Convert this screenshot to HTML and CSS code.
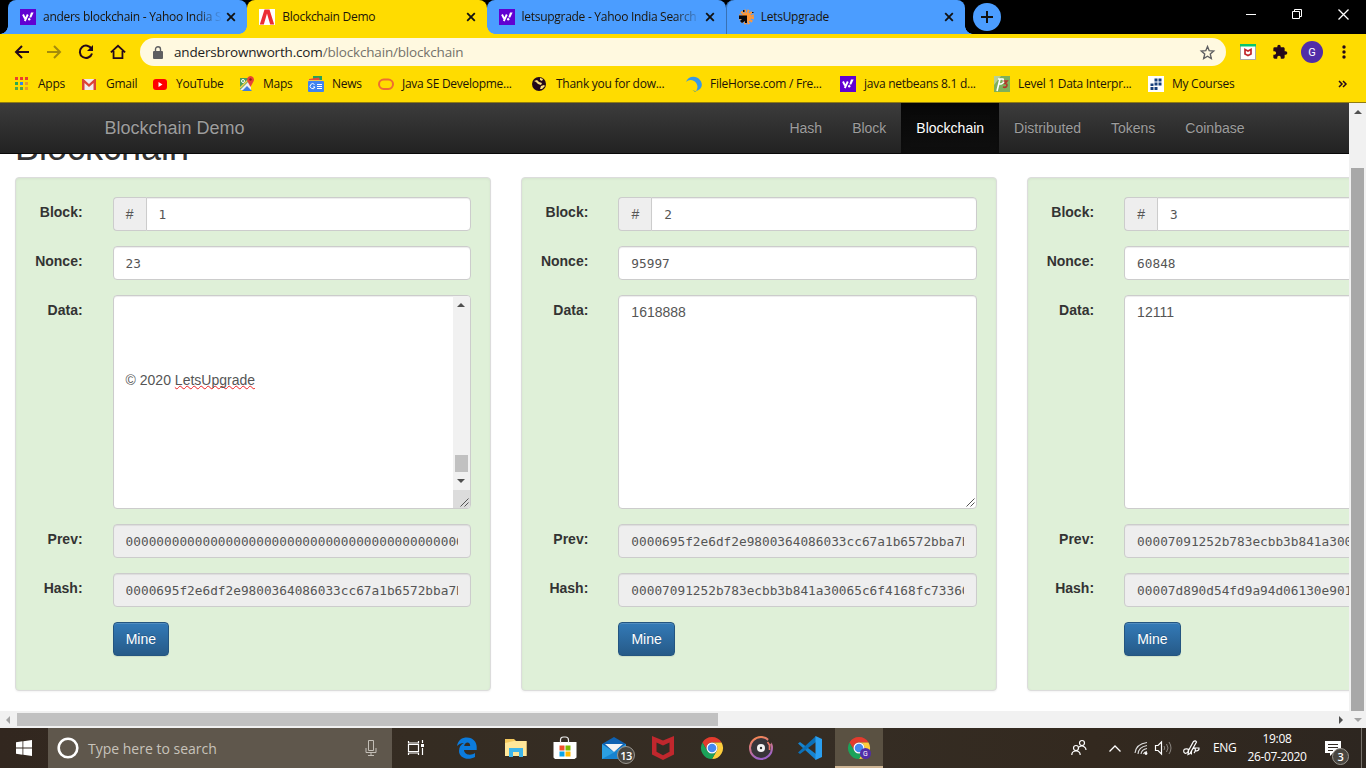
FILE: index.html
```html
<!DOCTYPE html>
<html lang="en">
<head>
<meta charset="utf-8">
<title>Blockchain Demo</title>
<link rel="stylesheet" href="styles.css">
</head>
<body>
<svg width="0" height="0" class="defs">
  <symbol id="yahoo" viewBox="0 0 16 16"><rect width="16" height="16" fill="#6001d2"/><path d="M3 5.500l2 4M7.800 5.500L4.800 12" stroke="#fff" stroke-width="1.900" fill="none"/><path d="M11 3.500h2.600L11.300 8.600H9.300z" fill="#fff"/><circle cx="9.200" cy="10.300" r="1.200" fill="#fff"/></symbol>
  <symbol id="close" viewBox="0 0 10 10"><path d="M1.200 1.200l7.600 7.600M8.800 1.200L1.200 8.800" stroke="#111" stroke-width="1.800" fill="none"/></symbol>
  <symbol id="chrome" viewBox="0 0 24 24"><path d="M2.470 6.500A11 11 0 0 1 21.530 6.500H12A5.500 5.500 0 0 0 7.240 14.750z" fill="#e33b2e"/><path d="M21.530 6.500A11 11 0 0 1 12 23L16.760 14.750A5.500 5.500 0 0 0 12 6.500z" fill="#fdcd3c"/><path d="M12 23A11 11 0 0 1 2.470 6.500L7.240 14.750A5.500 5.500 0 0 0 16.760 14.750z" fill="#1ba35a"/><circle cx="12" cy="12" r="5.500" fill="#fff"/><circle cx="12" cy="12" r="4.300" fill="#4688f1"/></symbol>
</svg>

<header class="browser">
  <div class="tabs">
    <div class="tab"><svg class="fav"><use href="#yahoo"/></svg><span class="title fade">anders blockchain - Yahoo India S</span><svg class="x"><use href="#close"/></svg></div>
    <div class="tab active"><svg class="fav" viewBox="0 0 16 16"><rect width="16" height="16" fill="#fff"/><path d="M.8 15.500L5.500.5h5l4.700 15h-4L8 4.500l-3.200 11z" fill="#ec2d35"/></svg><span class="title">Blockchain Demo</span><svg class="x"><use href="#close"/></svg></div>
    <div class="tab"><svg class="fav"><use href="#yahoo"/></svg><span class="title fade">letsupgrade - Yahoo India Search</span><svg class="x"><use href="#close"/></svg></div>
    <div class="tab last"><svg class="fav" viewBox="0 0 16 16"><circle cx="8.500" cy="8" r="6" fill="none" stroke="#ff9838" stroke-width="3" stroke-dasharray="2 1.140"/><circle cx="8.500" cy="8" r="4.800" fill="#ff9838"/><path d="M1 6.500h8V14H7v-2l-3 2-2-2 2-2H1zM5 1h1.500v2H5zM14 3h1.500v1H14z" fill="#08080c"/></svg><span class="title">LetsUpgrade</span><svg class="x"><use href="#close"/></svg></div>
    <button class="newtab"><svg width="12" height="12" viewBox="0 0 12 12"><path d="M6 0v12M0 6h12" stroke="#111" stroke-width="2"/></svg></button>
    <div class="window">
      <svg width="10" height="10"><path d="M0 5.500h10" stroke="#fff"/></svg>
      <svg width="10" height="10" viewBox="0 0 10 10"><path d="M.5 2.500h7v7h-7zM2.500 2.500v-2h7v7h-2" stroke="#fff" fill="none"/></svg>
      <svg width="11" height="11" viewBox="0 0 11 11"><path d="M.5.5l10 10M10.500.5l-10 10" stroke="#fff" stroke-width="1.300"/></svg>
    </div>
  </div>

  <div class="toolbar">
    <div class="nav-icons">
      <svg viewBox="0 0 16 16"><path d="M15 8H2M8 2L2 8l6 6" class="ink"/></svg>
      <svg viewBox="0 0 16 16"><path d="M1 8h13M8 2l6 6-6 6" fill="none" stroke="#a48b0b" stroke-width="2"/></svg>
      <svg viewBox="0 0 16 16"><path d="M13.600 5A6.200 6.200 0 1 0 14 9.500" class="ink"/><path d="M15 1v6H9z" fill="#24091a"/></svg>
      <svg viewBox="0 0 18 18"><path d="M1 9.500L9 2l8 7.500M4 8v8h10V8" class="ink"/></svg>
    </div>
    <div class="address">
      <svg width="10" height="13" viewBox="0 0 10 13"><path d="M1 5h8q1 0 1 1v6q0 1-1 1H1q-1 0-1-1V6q0-1 1-1z" fill="#5f5f61"/><path d="M2.500 6V3.200a2.500 2.500 0 0 1 5 0V6" fill="none" stroke="#5f5f61" stroke-width="1.400"/></svg>
      <span class="url">andersbrownworth.com<i>/blockchain/blockchain</i></span>
      <svg class="star" width="15" height="15" viewBox="0 0 15 15"><path d="M7.500 1.500l1.700 4.200 4.500.4-3.400 3 1 4.400-3.800-2.300-3.800 2.300 1-4.400-3.400-3 4.500-.4z" fill="none" stroke="#5f5f61" stroke-width="1.400"/></svg>
    </div>
    <div class="ext">
      <svg width="16" height="16" viewBox="0 0 16 16"><rect x=".5" y=".5" width="15" height="15" fill="#fff" stroke="#aaa"/><path d="M0 0h16v2.500H0z" fill="#08c66c"/><path d="M5 5.500l3 1.500 3-1.500V10l-3 1.500L5 10z" fill="none" stroke="#c1272d" stroke-width="1.700"/></svg>
      <svg width="16" height="16" viewBox="0 0 24 24"><path d="M20.500 11H19V7c0-1.100-.9-2-2-2h-4V3.500a2.500 2.500 0 0 0-5 0V5H4a2 2 0 0 0-2 2v3.800h1.500a2.700 2.700 0 0 1 0 5.400H2V20c0 1.100.9 2 2 2h3.800v-1.500a2.700 2.700 0 0 1 5.400 0V22H17a2 2 0 0 0 2-2v-4h1.500a2.500 2.500 0 0 0 0-5z" fill="#24091a"/></svg>
      <span class="avatar">G</span>
      <svg width="4" height="14" viewBox="0 0 4 14"><g fill="#24091a"><circle cx="2" cy="2" r="1.700"/><circle cx="2" cy="7" r="1.700"/><circle cx="2" cy="12" r="1.700"/></g></svg>
    </div>
  </div>

  <div class="bookmarks">
    <a><svg viewBox="0 0 16 16"><path d="M1 1h3v3H1zM6 1h3v3H6zM11 1h3v3h-3z" fill="#e8402c"/><path d="M1 6h3v3H1z" fill="#2ba84f"/><path d="M6 6h3v3H6z" fill="#3385ec"/><path d="M11 6h3v3h-3zM11 11h3v3h-3z" fill="#e99a2b"/><path d="M1 11h3v3H1zM6 11h3v3H6z" fill="#57a845"/></svg><span>Apps</span></a>
    <a><svg viewBox="0 0 16 16"><path d="M0 3h14v11H0z" fill="#f0eeee"/><path d="M0 14V3h1.500L7 8l5.500-5H14v11h-2.500V7L7 11 2.500 7v7z" fill="#dc4437"/></svg><span>Gmail</span></a>
    <a><svg viewBox="0 0 16 16"><rect x="1" y="3" width="14" height="11" rx="3" fill="#f00"/><path d="M6.500 6v5l4-2.500z" fill="#fff"/></svg><span>YouTube</span></a>
    <a><svg viewBox="0 0 16 16"><path d="M1 2h11v12H1z" fill="#4a9e5b"/><path d="M1 14L12 3v11z" fill="#eee"/><path d="M3 15l5-5 5 5z" fill="#3f7de0"/><path d="M1 12L12 1" stroke="#f6d14c" stroke-width="1.500"/><circle cx="4" cy="5" r="1.500" fill="none" stroke="#fff"/><path d="M11.500 11L8.300 5a3.500 3.500 0 1 1 6.400 0z" fill="#e74335"/><circle cx="11.500" cy="3.500" r="1.200" fill="#8c1d18"/></svg><span>Maps</span></a>
    <a><svg viewBox="0 0 16 16"><path d="M5 0h9v4H5z" fill="#28a05a"/><path d="M1 3l10-1.500 1 3H1z" fill="#e84b39"/><path d="M0 4h14v3H0z" fill="#f7c64a"/><rect y="5" width="16" height="11" rx="1" fill="#3f83ef"/><path d="M6.500 8.500A2.500 2.500 0 1 0 7 11H5M9 8.500h5M9 10.500h5M9 12.500h5" stroke="#fff" fill="none"/></svg><span>News</span></a>
    <a><svg viewBox="0 0 16 16"><rect x="1" y="3.500" width="14" height="9.500" rx="4.700" fill="none" stroke="#ee6d32" stroke-width="2"/></svg><span>Java SE Developme...</span></a>
    <a><svg viewBox="0 0 16 16"><circle cx="7" cy="8" r="7" fill="#24091a"/><path d="M2 5l3-1 2 2 3 1-1 2-3-1-2-2zM8 2l3 1-1 2-2-1zM9 10l3-1 1 1-3 3H8z" fill="#fbe07c"/></svg><span>Thank you for dow...</span></a>
    <a><svg viewBox="0 0 16 16"><path d="M0 6C2 0 10-1 14 4s1 10-4 11c3-4 1-8-2-10C5 3 2 4 0 6z" fill="#3799e7"/><path d="M4 12q4 4 7 3l-2 1z" fill="#5c9b82"/></svg><span>FileHorse.com / Fre...</span></a>
    <a><svg><use href="#yahoo"/></svg><span>java netbeans 8.1 d...</span></a>
    <a><svg viewBox="0 0 16 16"><rect width="16" height="16" fill="#7fb05a"/><path d="M0 0h7L0 9z" fill="#b9d096"/><path d="M4 3h5q2 4-2 5H5m1-5L3 15" stroke="#fff" stroke-width="1.600" fill="none"/><path d="M9.500 5H13l-2 2.500q2.500 0 1.800 2.500-.8 2-3.800 1" stroke="#b5352a" stroke-width="1.700" fill="none"/></svg><span>Level 1 Data Interpr...</span></a>
    <a><svg viewBox="0 0 16 16"><rect width="16" height="16" fill="#fff"/><path d="M6.500 2.500h3v3h-3zM10.500 2.500h3v3h-3zM6.500 6.500h3v3h-3zM10.500 6.500h3v3h-3zM2.500 7.500h3v2.500h-3zM2.500 11h3v3h-3zM6.500 11h3v3h-3z" fill="#173f7a"/></svg><span>My Courses</span></a>
    <svg class="more" width="9" height="8" viewBox="0 0 9 8"><path d="M1 1l3 3-3 3M5 1l3 3-3 3" fill="none" stroke="#24091a" stroke-width="1.500"/></svg>
  </div>
</header>

<main class="viewport">
  <div class="page">
    <nav class="navbar">
      <a class="brand">Blockchain Demo</a>
      <div class="links"><a>Hash</a><a>Block</a><a class="current">Blockchain</a><a>Distributed</a><a>Tokens</a><a>Coinbase</a></div>
    </nav>
    <h1>Blockchain</h1>
    <div class="chain">
      <section class="well">
        <label>Block:</label><div class="group"><b>#</b><div class="input mono">1</div></div>
        <label>Nonce:</label><div class="input mono">23</div>
        <label>Data:</label>
        <div class="area scrolling"><div class="copy">© 2020 <u>LetsUpgrade</u></div>
          <div class="inner-scroll"><i class="up"></i><span class="thumb"></span><i class="down"></i><span class="corner"><svg width="17" height="18"><path d="M7.500 16.500l8-8M11.500 16.500l4-4" stroke="#555"/></svg></span></div>
        </div>
        <label>Prev:</label><div class="input mono off"><span>00000000000000000000000000000000000000000000</span></div>
        <label>Hash:</label><div class="input mono off"><span>0000695f2e6df2e9800364086033cc67a1b6572bba7b</span></div>
        <button class="mine">Mine</button>
      </section>
      <section class="well">
        <label>Block:</label><div class="group"><b>#</b><div class="input mono">2</div></div>
        <label>Nonce:</label><div class="input mono">95997</div>
        <label>Data:</label>
        <div class="area">1618888<svg class="grip" width="17" height="17"><path d="M7.500 15.500l8-8M11.500 15.500l4-4" stroke="#555"/></svg></div>
        <label>Prev:</label><div class="input mono off"><span>0000695f2e6df2e9800364086033cc67a1b6572bba7b</span></div>
        <label>Hash:</label><div class="input mono off"><span>00007091252b783ecbb3b841a30065c6f4168fc73360</span></div>
        <button class="mine">Mine</button>
      </section>
      <section class="well">
        <label>Block:</label><div class="group"><b>#</b><div class="input mono">3</div></div>
        <label>Nonce:</label><div class="input mono">60848</div>
        <label>Data:</label>
        <div class="area">12111</div>
        <label>Prev:</label><div class="input mono off"><span>00007091252b783ecbb3b841a300</span></div>
        <label>Hash:</label><div class="input mono off"><span>00007d890d54fd9a94d06130e901</span></div>
        <button class="mine">Mine</button>
      </section>
    </div>
  </div>
  <div class="vscroll"><i class="up"></i><span></span></div>
  <div class="hscroll"><i class="left"></i><span></span><i class="right"></i></div>
  <div class="scroll-end"><i class="down pale"></i></div>
</main>

<footer class="taskbar">
  <div class="start"><svg width="16" height="16" viewBox="0 0 16 16"><path d="M0 2.300L6.500 1.300V7.500H0zM7.300 1.200L16 0v7.500H7.300zM0 8.500h6.500v6.200L0 13.700zM7.300 8.500H16V16l-8.700-1.200z" fill="#fff"/></svg></div>
  <div class="search"><svg width="22" height="22" viewBox="0 0 22 22"><circle cx="11" cy="11" r="9.300" fill="none" stroke="#fff" stroke-width="2.600"/></svg><span>Type here to search</span><svg class="mic" width="12" height="16" viewBox="0 0 12 16"><path d="M3.500.5h5v10h-5zM1 8v4.500h10V8M6 12.500v3M3 15.500h6" fill="none" stroke="#c3beb6"/></svg></div>
  <div class="apps">
    <div class="app view"><svg width="18" height="16" viewBox="0 0 18 16"><path d="M1.500 1v2h10V1M1.500 15v-2h10v2M1.500 4.500h10v7h-10zM15.500 0v3M15.500 8v7" stroke="#fff" stroke-width="1.200" fill="none"/><path d="M14 4h3v3h-3z" fill="#fff"/></svg></div>
    <div class="app"><svg width="20" height="22" viewBox="0 0 20 22"><path d="M0 9C1 3 5 .5 10 .5c6 0 9.700 4.500 9.700 9.500v3H7c.2 5 7 6 11 3v4c-7 4-16 1-16-6 0-4 2-6.500 5-8C3.500 6 1.500 7.500 0 9zm7.200 0h6c0-5-5.500-4.500-6 0z" fill="#0b7bdc"/></svg></div>
    <div class="app"><svg width="22" height="20" viewBox="0 0 22 20"><path d="M0 1h9l2 2h10.500v15H0z" fill="#f4c85c"/><path d="M0 5l9-2h12.500v15H0z" fill="#ffe799"/><path d="M4 10h14v9h-4v-5H8v5H4z" fill="#3db5e9"/></svg></div>
    <div class="app"><svg width="24" height="24" viewBox="0 0 24 24"><path d="M.5 6h23v15.500l-2 1.500H2L.5 21.500z" fill="#fff"/><path d="M7.500 7V4q0-3 3-3h2q3 0 3 3v3" fill="none" stroke="#eee" stroke-width="1.200"/><path d="M6.500 9.500h5v5h-5z" fill="#f1502b"/><path d="M12.500 9.500h5v5h-5z" fill="#7fba00"/><path d="M6.500 15.500h5v5h-5z" fill="#0aa3e8"/><path d="M12.500 15.500h5v5h-5z" fill="#ffb901"/></svg></div>
    <div class="app"><svg width="24" height="22" viewBox="0 0 24 22"><path d="M0 7L12 0l12 7v15H0z" fill="#0f62b2"/><path d="M0 7l12 8 12-8v15H0z" fill="#2b9fe2"/><path d="M24 9L0 22h24z" fill="#1683d0"/><path d="M3 7h18l-9 8z" fill="#f4f4f4"/></svg><em class="badge">13</em></div>
    <div class="app"><svg width="22" height="24" viewBox="0 0 22 24"><path d="M0 0l11 4.500L22 0v18.500L11 24 0 18.500z" fill="#c1272d"/><path d="M4.500 6.500L11 9.500l6.500-3v9.200L11 19.200l-6.500-3.500z" fill="#342c24"/></svg></div>
    <div class="app"><svg width="24" height="24"><use href="#chrome"/></svg></div>
    <div class="app"><svg width="24" height="24" viewBox="0 0 24 24"><defs><linearGradient id="gr" x2="0.300" y2="1"><stop stop-color="#ff8a4a"/><stop offset="1" stop-color="#9c62c8"/></linearGradient></defs><circle cx="12" cy="12" r="11" fill="#38353a" stroke="url(#gr)" stroke-width="2"/><path d="M18 7l2-5 4 2-2 4z" fill="#342c24"/><path d="M18.500 6l2 3v5" stroke="#ec7868" stroke-width="1.600" fill="none"/><circle cx="12" cy="12" r="4" fill="#f5f5f5"/><circle cx="12" cy="12" r="1.200" fill="#333"/></svg></div>
    <div class="app"><svg width="24" height="24" viewBox="0 0 24 24"><path d="M0 7.500l2-1.500 16 12v6z" fill="#1684d0"/><path d="M18 0v6L2 18l-2-1.500z" fill="#0b70b8"/><path d="M17.500 0L24 3v18l-6.500 3z" fill="#2a9ff0"/></svg></div>
    <div class="app on"><svg width="24" height="24"><use href="#chrome"/></svg><em class="profile">G</em></div>
  </div>
  <div class="tray">
    <svg class="people" width="16" height="16" viewBox="0 0 16 16"><g fill="none" stroke="#fff" stroke-width="1.200"><circle cx="5" cy="8" r="2.500"/><path d="M.8 15q0-4 4.200-4t4.200 4"/><circle cx="11" cy="3" r="2.500"/><path d="M8 7q3-2 5.500 0 1.500 1 1.500 3"/></g></svg>
    <svg class="chev" width="12" height="7" viewBox="0 0 12 7"><path d="M.5 6.500L6 1l5.500 5.500" stroke="#fff" stroke-width="1.300" fill="none"/></svg>
    <svg class="wifi" width="14" height="14" viewBox="0 0 14 14"><g fill="none" stroke="#ddd" stroke-width="1.100"><path d="M1 12Q2 3 13 1.500M4 13Q4.500 6 13 4.500M7 13q.5-4.500 6-5.500M9.500 13q.5-2 3.500-2.500"/></g><circle cx="12" cy="12.500" r="1.400" fill="#fff"/></svg>
    <svg class="vol" width="17" height="14" viewBox="0 0 17 14"><path d="M.5 4.500H3L6.500 1v12L3 9.500H.5z" fill="none" stroke="#fff" stroke-width="1.200"/><path d="M9 5q1.500 2 0 4M11.500 3q3 4 0 8M14 1q4 6 0 12" fill="none" stroke="#8b8681"/></svg>
    <svg class="pen" width="17" height="16" viewBox="0 0 17 16"><path d="M5 9Q0 8 .8 12q1.700 3 4.200-.5L10.500 1.500q2-1.500 3 .5L7 13.500l-2 1 .5-3zM8.500 14.500q-1-5 3-6.500 2 2-.5 5M12 8h4q.5 3-4 3" stroke="#fff" stroke-width="1.200" fill="none"/></svg>
    <span class="lang">ENG</span>
    <div class="clock"><span>19:08</span><span>26-07-2020</span></div>
    <div class="note"><svg width="16" height="15" viewBox="0 0 16 15"><path d="M0 0h16v12H8l-3 3v-3H0z" fill="#fff"/><path d="M3 3.500h10M3 6.500h10M3 9.500h5" stroke="#342c24"/></svg><em class="badge">3</em></div>
    <div class="peek"></div>
  </div>
</footer>
</body>
</html>
```
FILE: styles.css
```css
* { box-sizing: border-box; }
html, body { margin: 0; height: 100%; overflow: hidden; }
body { display: flex; flex-direction: column; width: 1366px; height: 768px; background: #fff; font-family: "Open Sans", "Noto Sans", sans-serif; font-size: 12px; color: #1c1408; }
svg { display: block; flex: none; overflow: visible; }
.defs { position: absolute; }
span { white-space: nowrap; }
.ink { fill: none; stroke: #24091a; stroke-width: 2; }

/* Browser frame */
.browser { flex: none; height: 103px; background: #ffdc00; border-bottom: 1px solid #8f7b12; }
.tabs { display: flex; height: 34px; background: #000; padding-left: 8px; }
.tab { position: relative; display: flex; align-items: center; width: 239.250px; height: 34px; padding: 0 11px 0 12px; background: #4b9dff; border-radius: 8px 8px 0 0; font-size: 12px; letter-spacing: -.28px; }
.tab::before, .tab::after { content: ""; position: absolute; bottom: 0; width: 8px; height: 8px; }
.tab::before { left: -8px; background: radial-gradient(circle at 0 0, transparent 7.500px, #4b9dff 8px); }
.tab::after { right: -8px; background: radial-gradient(circle at 100% 0, transparent 7.500px, #4b9dff 8px); }
.tab.active { background: #ffdc00; z-index: 1; }
.tab.active::before { background: radial-gradient(circle at 0 0, transparent 7.500px, #ffdc00 8px); }
.tab.active::after { background: radial-gradient(circle at 100% 0, transparent 7.500px, #ffdc00 8px); }
.tab.last { box-shadow: inset 1px 0 #3871b4; }
.fav { width: 16px; height: 16px; margin-right: 7px; }
.title { flex: 1; overflow: hidden; padding-bottom: 2px; }
.fade { margin-right: 4px; -webkit-mask-image: linear-gradient(90deg, #000 85%, transparent); mask-image: linear-gradient(90deg, #000 85%, transparent); }
.x { width: 10px; height: 10px; }
.newtab { display: grid; place-items: center; width: 28px; height: 28px; margin: 3px 0 0 8px; padding: 0; border: 0; border-radius: 50%; background: #4b9dff; }
.window { display: flex; gap: 36px; margin: 9px 17px 0 auto; }

.toolbar { display: flex; align-items: center; height: 36px; padding-left: 14px; }
.nav-icons { display: flex; gap: 16px; align-items: center; width: 126px; }
.nav-icons svg { width: 16px; height: 16px; }
.address { display: flex; align-items: center; width: 1086px; height: 28px; padding: 0 11px 0 13px; border-radius: 14px; background: #fff9e0; }
.url { margin-left: 11px; font-size: 13.500px; letter-spacing: -.17px; color: #1d1d1d; }
.url i { font-style: normal; color: #74716a; }
.star { margin-left: auto; }
.ext { display: flex; align-items: center; margin-left: 14px; }
.ext svg:nth-child(2) { margin: 0 13px 0 16px; }
.avatar { display: grid; place-items: center; width: 22px; height: 22px; margin-right: 19px; border-radius: 50%; background: #512da8; color: #fff; font: 11px Roboto, sans-serif; }

.bookmarks { display: grid; grid-template-columns: 68px 70px 87px 69px 70px 154px 154px 154px 154px 154px 190px auto; align-items: center; height: 28px; padding-left: 14px; letter-spacing: -.27px; }
.bookmarks a { display: flex; align-items: center; gap: 8px; }
.bookmarks a svg { width: 16px; height: 16px; }
.bookmarks span { padding-bottom: 2px; }

/* Page */
.viewport { flex: none; display: grid; grid-template: 608px 17px / 1349px 17px; height: 625px; }
.page { overflow: hidden; font: 14px/20px "Liberation Sans", Arial, sans-serif; color: #333; background: #fff; }
.navbar { position: relative; z-index: 1; display: flex; justify-content: space-between; height: 51px; padding: 0 89.500px 0 104.500px; border-bottom: 1px solid #080808; background: linear-gradient(#3c3c3c, #222); color: #9d9d9d; text-shadow: 0 -1px 0 rgba(0,0,0,.25); }
.brand { padding-top: 15px; font-size: 18px; }
.links { display: flex; }
.links a { padding: 15px; height: 50px; }
.links .current { background: linear-gradient(#080808, #0f0f0f); color: #fff; box-shadow: inset 0 3px 9px rgba(0,0,0,.25); }
h1 { margin: -25.600px 0 9px 15px; font-size: 36px; font-weight: 500; line-height: 39.600px; }
.chain { display: flex; gap: 30px; width: 1600px; padding-left: 15px; }
.well { flex: none; display: grid; grid-template-columns: 47.600px minmax(0, 1fr); column-gap: 30px; row-gap: 15px; align-content: start; width: 475.750px; height: 514px; padding: 19px; border: 1px solid #dcdcdc; border-radius: 4px; background: #dff0d8; box-shadow: inset 0 1px 3px rgba(0,0,0,.05), 0 1px 2px rgba(0,0,0,.05); }
label { padding-top: 5px; text-align: right; font-weight: bold; }
.input, .area { border: 1px solid #ccc; border-radius: 4px; background: #fff; color: #555; box-shadow: inset 0 1px 1px rgba(0,0,0,.075); padding: 6px 12px; }
.input { height: 34px; }
.input.mono { padding-top: 7px; font-family: "DejaVu Sans Mono", monospace; font-size: 12.780px; }
.off { background: #eee; }
.off span { display: block; overflow: hidden; }
.group { display: flex; }
.group b { width: 33px; height: 34px; padding-top: 6px; text-align: center; font-weight: normal; color: #555; background: #eee; border: 1px solid #ccc; border-right: 0; border-radius: 4px 0 0 4px; }
.group .input { flex: 1; border-radius: 0 4px 4px 0; }
.area { position: relative; height: 214px; }
.grip { position: absolute; right: 0; bottom: 0; }
.scrolling { display: flex; justify-content: space-between; padding: 0 0 0 12px; overflow: hidden; }
.copy { padding-top: 74px; }
.copy u { text-decoration: underline wavy #e22 1px; text-underline-offset: 0; text-decoration-skip-ink: none; }
.inner-scroll { display: flex; flex-direction: column; align-items: center; width: 17px; background: #f1f1f1; }
.inner-scroll .up { margin-top: 7px; }
.inner-scroll .thumb { width: 13px; height: 17px; margin: auto 0 7px; background: #c1c1c1; }
.inner-scroll .down { margin-bottom: 7px; }
.corner { height: 18px; background: #dcdcdc; }
.mine { grid-column: 2; justify-self: start; width: 56.500px; height: 34px; padding: 0; border: 1px solid #245580; border-radius: 4px; background: linear-gradient(#337ab7, #265a88); box-shadow: inset 0 1px 0 rgba(255,255,255,.15), 0 1px 1px rgba(0,0,0,.075); color: #fff; font: 14px "Liberation Sans", Arial, sans-serif; text-shadow: 0 -1px 0 rgba(0,0,0,.2); }

/* Scrollbars */
.up, .down { border: 4px solid transparent; border-top: 0; border-bottom-color: #505050; }
.down { border: 4px solid transparent; border-bottom: 0; border-top-color: #505050; }
.pale { border-top-color: #a3a3a3; }
.left, .right { border: 4px solid transparent; border-left: 0; border-right-color: #a3a3a3; }
.right { border: 4px solid transparent; border-right: 0; border-left-color: #505050; }
.vscroll, .hscroll, .scroll-end { background: #f1f1f1; }
.vscroll { display: flex; flex-direction: column; align-items: center; padding-top: 7px; }
.vscroll span { width: 13px; margin-top: auto; height: 543px; background: #a8a8a8; }
.hscroll { display: flex; align-items: center; padding: 0 6px; }
.hscroll span { width: 701px; height: 13px; margin-left: 7px; background: #c1c1c1; }
.hscroll .right { margin-left: auto; }
.scroll-end { display: grid; place-items: center; }

/* Taskbar */
.taskbar { flex: none; display: flex; height: 40px; background: linear-gradient(90deg, #32271f, #352c22 30%, #352d24 60%, #33291f 80%, #2d2620); color: #fff; }
.start { display: grid; place-items: center; width: 48px; }
.search { display: flex; align-items: center; width: 344px; padding: 0 15px 0 9px; background: #5f574c; color: #c8c3bb; font-size: 14px; }
.search span { margin-left: 9px; }
.mic { margin-left: auto; }
.apps { display: flex; gap: 1px; }
.app { position: relative; display: grid; place-items: center; width: 48px; height: 40px; }
.view { margin-right: 2px; }
.on { background: #5a5142; border-bottom: 2px solid #ceb594; padding-top: 2px; }
em { font-style: normal; }
.badge { position: absolute; display: grid; place-items: center; width: 18px; height: 18px; border: 1px solid #9a968f; border-radius: 50%; background: #494640; font-size: 11px; font-weight: 600; letter-spacing: -.5px; line-height: 1; }
.app .badge { left: 27px; top: 18px; }
.profile { position: absolute; left: 25px; top: 20px; display: grid; place-items: center; width: 11px; height: 11px; border-radius: 50%; background: #512da8; font: 7px Roboto, sans-serif; }
.tray { display: flex; align-items: center; margin-left: 188px; }
.chev { margin-left: 22px; }
.wifi { margin-left: 13px; }
.vol { margin-left: 7px; }
.pen { margin-left: 11px; }
.lang { width: 24px; margin-left: 13px; font-size: 12px; letter-spacing: -.3px; padding-bottom: 1px; }
.clock { display: flex; flex-direction: column; align-items: center; justify-content: center; width: 60px; margin-left: 10px; line-height: 18px; font-size: 12px; letter-spacing: -.35px; padding-bottom: 1px; }
.note { position: relative; margin-left: 18px; }
.note .badge { left: 7px; top: 7px; width: 17px; height: 17px; }
.peek { width: 1px; height: 40px; margin-left: 20px; background: #76716b; }
```
